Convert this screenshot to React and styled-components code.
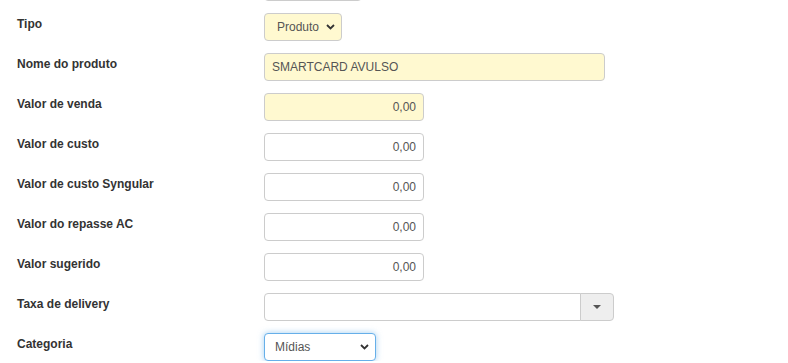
import styled, { createGlobalStyle } from 'styled-components'

const GlobalStyle = createGlobalStyle`
  body {
    margin: 0;
    background: #fff;
    font-family: "Liberation Sans", Arial, sans-serif;
    font-size: 12px;
    color: #333;
    overflow: hidden;
  }
`

const Chevron = () => (
  <svg width="9" height="6" viewBox="0 0 9 6">
    <path d="M1 1 L4.5 4.5 L8 1" fill="none" stroke="#333" strokeWidth="1.8" />
  </svg>
)

const Caret = () => (
  <svg width="8" height="4" viewBox="0 0 8 4">
    <path d="M0 0 H8 L4 4 Z" fill="#555" />
  </svg>
)

const fields = [
  { label: 'Valor de venda', value: '0,00', highlight: true },
  { label: 'Valor de custo', value: '0,00' },
  { label: 'Valor de custo Syngular', value: '0,00' },
  { label: 'Valor do repasse AC', value: '0,00' },
  { label: 'Valor sugerido', value: '0,00' },
]

export default function App() {
  return (
    <>
      <GlobalStyle />
      <Form>
        <Row>
          <Label />
          <Input $width={98} />
        </Row>
        <Row>
          <Label>Tipo</Label>
          <SelectWrap $width={78}>
            <Select $highlight defaultValue="Produto" $pl={12}>
              <option>Produto</option>
            </Select>
            <Arrow><Chevron /></Arrow>
          </SelectWrap>
        </Row>
        <Row>
          <Label>Nome do produto</Label>
          <Input $width={341} $highlight defaultValue="SMARTCARD AVULSO" />
        </Row>
        {fields.map((f) => (
          <Row key={f.label}>
            <Label>{f.label}</Label>
            <Input $width={160} $right $highlight={f.highlight} defaultValue={f.value} />
          </Row>
        ))}
        <Row>
          <Label>Taxa de delivery</Label>
          <Group>
            <GroupInput />
            <GroupButton><Caret /></GroupButton>
          </Group>
        </Row>
        <Row>
          <Label>Categoria</Label>
          <SelectWrap $width={112}>
            <Select $focus defaultValue="Mídias" $pl={10}>
              <option>Mídias</option>
            </Select>
            <Arrow><Chevron /></Arrow>
          </SelectWrap>
        </Row>
      </Form>
    </>
  )
}

const Form = styled.form`
  display: flex;
  flex-direction: column;
  gap: 12px;
  margin-top: -27px;
`

const Row = styled.div`
  display: flex;
  align-items: flex-start;
  height: 28px;
`

const Label = styled.label`
  width: 247px;
  padding-left: 17px;
  padding-top: 3px;
  font-weight: bold;
  font-size: 12px;
  line-height: 17px;
  color: #333;
  flex-shrink: 0;
`

const fieldBase = `
  box-sizing: border-box;
  height: 28px;
  border: 1px solid #ccc;
  border-radius: 4px;
  font-family: "Liberation Sans", Arial, sans-serif;
  font-size: 12px;
  color: #555;
  outline: none;
`

const Input = styled.input`
  ${fieldBase}
  width: ${(p) => p.$width}px;
  padding: 0 7px;
  text-align: ${(p) => (p.$right ? 'right' : 'left')};
  background: ${(p) => (p.$highlight ? '#fff9d0' : '#fff')};
`

const SelectWrap = styled.div`
  position: relative;
  width: ${(p) => p.$width}px;
`

const Select = styled.select`
  ${fieldBase}
  appearance: none;
  width: 100%;
  padding: 0 0 0 ${(p) => p.$pl}px;
  background: ${(p) => (p.$highlight ? '#fff9d0' : '#fff')};
  border-color: ${(p) => (p.$focus ? '#66afe9' : '#ccc')};
  box-shadow: ${(p) => (p.$focus ? '0 0 6px rgba(102, 175, 233, 0.6)' : 'none')};
`

const Arrow = styled.span`
  position: absolute;
  right: 7px;
  top: 11px;
  display: flex;
  pointer-events: none;
`

const Group = styled.div`
  display: flex;
  width: 350px;
  height: 28px;
`

const GroupInput = styled.input`
  ${fieldBase}
  flex: 1;
  min-width: 0;
  border-radius: 4px 0 0 4px;
  background: #fff;
`

const GroupButton = styled.button`
  box-sizing: border-box;
  width: 34px;
  height: 28px;
  border: 1px solid #ccc;
  border-left: 1px solid #ccc;
  margin-left: -1px;
  border-radius: 0 4px 4px 0;
  background: #eee;
  display: flex;
  align-items: center;
  justify-content: center;
  padding: 0;
`
